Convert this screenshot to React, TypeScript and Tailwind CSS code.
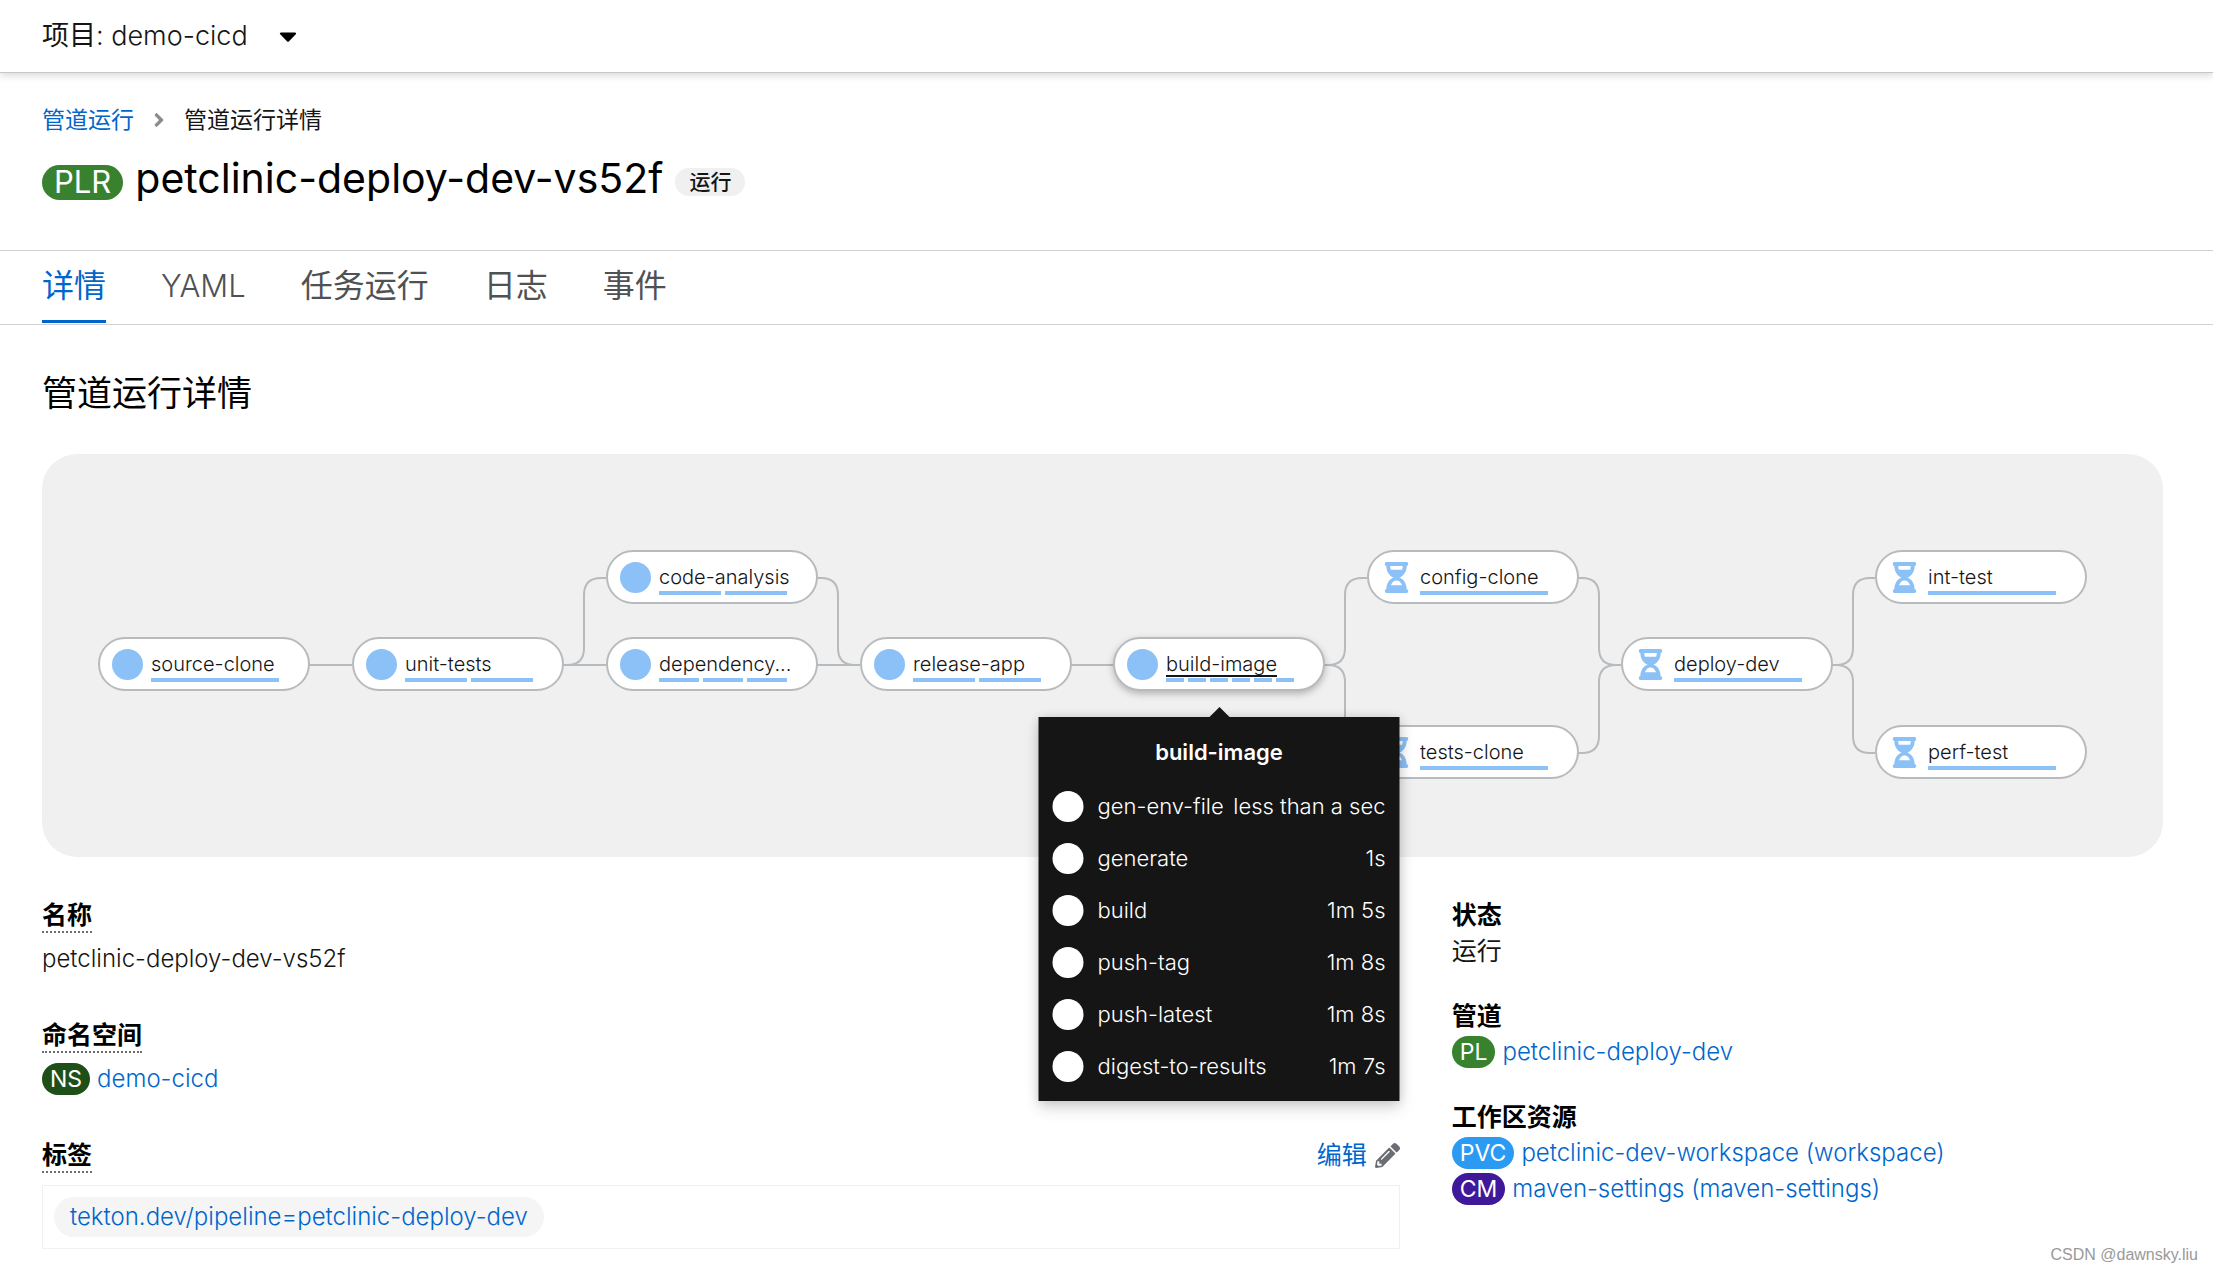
import type { ReactNode } from "react";
import { FaAngleRight, FaCaretDown, FaHourglassHalf, FaPencilAlt } from "react-icons/fa";

type TaskStatus = "running" | "pending";

interface Task {
  name: string;
  status: TaskStatus;
  steps: number;
  place: string;
  active?: boolean;
}

const tasks: Task[] = [
  { name: "source-clone", status: "running", steps: 1, place: "left-[56px] top-[183px]" },
  { name: "unit-tests", status: "running", steps: 2, place: "left-[310px] top-[183px]" },
  { name: "code-analysis", status: "running", steps: 2, place: "left-[564px] top-[96px]" },
  { name: "dependency...", status: "running", steps: 3, place: "left-[564px] top-[183px]" },
  { name: "release-app", status: "running", steps: 2, place: "left-[818px] top-[183px]" },
  { name: "config-clone", status: "pending", steps: 1, place: "left-[1325px] top-[96px]" },
  { name: "tests-clone", status: "pending", steps: 1, place: "left-[1325px] top-[271px]" },
  { name: "deploy-dev", status: "pending", steps: 1, place: "left-[1579px] top-[183px]" },
  { name: "int-test", status: "pending", steps: 1, place: "left-[1833px] top-[96px]" },
  { name: "perf-test", status: "pending", steps: 1, place: "left-[1833px] top-[271px]" },
  { name: "build-image", status: "running", steps: 6, place: "left-[1071px] top-[183px]", active: true },
];

const edges = [
  "M267 211H310",
  "M521 211H564",
  "M521 211H525Q542 211 542 194V141Q542 124 559 124H564",
  "M775 124H779Q796 124 796 141V194Q796 211 813 211H818",
  "M775 211H818",
  "M1029 211H1071",
  "M1282 211H1286Q1303 211 1303 194V141Q1303 124 1320 124H1325",
  "M1282 211H1286Q1303 211 1303 228V282Q1303 299 1320 299H1325",
  "M1536 124H1540Q1557 124 1557 141V194Q1557 211 1574 211H1579",
  "M1536 299H1540Q1557 299 1557 282V228Q1557 211 1574 211H1579",
  "M1790 211H1794Q1811 211 1811 194V141Q1811 124 1828 124H1833",
  "M1790 211H1794Q1811 211 1811 228V282Q1811 299 1828 299H1833",
];

const steps = [
  ["gen-env-file", "less than a sec"],
  ["generate", "1s"],
  ["build", "1m 5s"],
  ["push-tag", "1m 8s"],
  ["push-latest", "1m 8s"],
  ["digest-to-results", "1m 7s"],
];

const tabs = ["详情", "YAML", "任务运行", "日志", "事件"];

function StepTooltip() {
  return (
    <div
      role="tooltip"
      className="absolute top-20 left-1/2 z-10 h-[384px] w-[361px] -translate-x-1/2 bg-[#151515] px-[14px] pt-4 text-white shadow-[0_7px_14px_rgba(3,3,3,0.16),0_0_10px_rgba(3,3,3,0.12)]"
    >
      <svg className="absolute -top-[10px] left-1/2 h-[11px] w-[22px] -translate-x-1/2 fill-[#151515]" viewBox="0 0 22 11" aria-hidden="true">
        <path d="M11 0L22 11H0Z" />
      </svg>
      <p className="mb-[9px] text-center text-[22px] leading-[38px] font-semibold">build-image</p>
      <ul>
        {steps.map(([name, time]) => (
          <li key={name} className="flex h-[52px] items-center text-[22px]">
            <span className="mr-[14px] size-[31px] rounded-full bg-white" />
            <span>{name}</span>
            <span className="ml-auto">{time}</span>
          </li>
        ))}
      </ul>
    </div>
  );
}

function TaskNode({ task }: { task: Task }) {
  const shadow = task.active ? "shadow-[0_3px_7px_rgba(3,3,3,0.25)]" : "";
  return (
    <div className={`absolute ${task.place}`}>
      <a
        href="#logs"
        className={`flex h-[54px] w-[212px] items-center rounded-full border-2 border-[#b8bbbe] bg-white pl-3 ${shadow}`}
      >
        {task.status === "running" ? (
          <span className="size-[31px] shrink-0 rounded-full bg-[#8bc1f7]" />
        ) : (
          <FaHourglassHalf className="size-[31px] shrink-0 text-[#8bc1f7]" />
        )}
        <span className="ml-2 flex w-32 flex-col pt-1">
          <span className={`text-[20px] leading-7 whitespace-nowrap ${task.active ? "underline underline-offset-4" : ""}`}>
            {task.name}
          </span>
          <span className="flex gap-1">
            {Array.from({ length: task.steps }, (_, i) => (
              <span key={i} className="h-1 flex-1 bg-[#8bc1f7]" />
            ))}
          </span>
        </span>
      </a>
      {task.active && <StepTooltip />}
    </div>
  );
}

function Badge({ color, children }: { color: string; children: ReactNode }) {
  return (
    <span className={`mr-[7px] inline-flex h-8 items-center rounded-full px-2 text-[23px] leading-8 font-normal text-white ${color}`}>
      {children}
    </span>
  );
}

function Resource({ badge, color, children }: { badge: string; color: string; children: ReactNode }) {
  return (
    <dd className="flex h-9 items-center">
      <Badge color={color}>{badge}</Badge>
      <a href="#resource" className="text-[#0066cc]">
        {children}
      </a>
    </dd>
  );
}

function Term({ children }: { children: ReactNode }) {
  return (
    <dt className="flex text-[25px] font-bold text-black">
      <span className="h-9 border-b-2 border-dotted border-[#6a6e73]">{children}</span>
    </dt>
  );
}

function PlainTerm({ children }: { children: ReactNode }) {
  return <dt className="text-[25px] font-bold text-black">{children}</dt>;
}

export default function App() {
  return (
    <div className="relative min-h-screen bg-white font-['Inter','Noto_Sans_CJK_SC',sans-serif] text-[24px] leading-9 font-light text-[#151515]">
      <header className="border-b border-[#c7c7c7] px-[42px] shadow-[0_3px_7px_rgba(3,3,3,0.14)]">
        <button type="button" className="flex h-[72px] items-center gap-[26px] text-[27px]">
          <span>
            <span className="font-normal">项目</span>: demo-cicd
          </span>
          <FaCaretDown className="size-7 text-black" />
        </button>
      </header>

      <div className="px-[42px] pt-[31px] pb-11">
        <nav aria-label="breadcrumb" className="flex items-center text-[23px] leading-8 font-normal">
          <a href="#runs" className="text-[#0066cc]">管道运行</a>
          <FaAngleRight className="mx-[14px] size-[22px] text-[#8a8d90]" />
          <span>管道运行详情</span>
        </nav>
        <h1 className="mt-[22px] flex h-12 items-center text-[41px] font-normal text-black">
          <span className="mr-3 flex h-[35px] items-center rounded-full bg-[#38812f] px-3 text-[31px] text-white">PLR</span>
          <span className="pb-2">petclinic-deploy-dev-vs52f</span>
          <span className="ml-3 flex h-7 items-center rounded-full bg-[#f0f0f0] px-[14px] text-[21px] font-medium text-[#151515]">
            运行
          </span>
        </h1>
      </div>

      <div role="tablist" className="flex h-[75px] gap-[55px] border-y border-[#d2d2d2] px-[42px] text-[32px]">
        {tabs.map((tab, i) => (
          <button
            key={tab}
            type="button"
            role="tab"
            aria-selected={i === 0}
            className={
              i === 0
                ? "mb-px border-b-[3px] border-[#0066cc] font-normal text-[#0066cc]"
                : tab === "YAML"
                  ? "mb-1 text-[31px] text-[#4f5255]"
                  : "mb-1 font-normal text-[#4f5255]"
            }
          >
            {tab}
          </button>
        ))}
      </div>

      <main className="pt-11 pr-[50px] pl-[42px]">
        <h2 className="mb-[37px] text-[35px] leading-[48px] font-normal text-black">管道运行详情</h2>

        <section aria-label="pipeline" className="relative h-[403px] rounded-[35px] bg-[#f0f0f0]">
          <svg className="absolute top-0 left-0 h-[403px] w-[2121px] fill-none stroke-[#b8bbbe] stroke-2" aria-hidden="true">
            {edges.map((d) => (
              <path key={d} d={d} />
            ))}
          </svg>
          {tasks.map((task) => (
            <TaskNode key={task.name} task={task} />
          ))}
        </section>

        <div className="grid grid-cols-[21fr_11fr] gap-[52px] pt-10 pb-6">
          <dl>
            <Term>名称</Term>
            <dd className="mt-2 mb-10">petclinic-deploy-dev-vs52f</dd>
            <Term>命名空间</Term>
            <div className="mt-2 mb-10">
              <Resource badge="NS" color="bg-[#1e4f18]">demo-cicd</Resource>
            </div>
            <div className="flex justify-between">
              <Term>标签</Term>
              <dd>
                <button type="button" className="flex items-center gap-2 text-[25px] font-normal text-[#0066cc]">
                  编辑
                  <FaPencilAlt className="size-[25px] text-[#6a6e73]" />
                </button>
              </dd>
            </div>
            <dd className="mt-3 flex border border-[#f0f0f0] px-[11px] py-[11px]">
              <a href="#label" className="flex h-10 items-center rounded-full bg-[#f5f5f5] px-4 text-[#0066cc]">
                tekton.dev/pipeline=petclinic-deploy-dev
              </a>
            </dd>
          </dl>

          <dl>
            <PlainTerm>状态</PlainTerm>
            <dd className="mb-[29px] text-[25px] font-normal">运行</dd>
            <PlainTerm>管道</PlainTerm>
            <div className="mb-[29px]">
              <Resource badge="PL" color="bg-[#38812f]">petclinic-deploy-dev</Resource>
            </div>
            <PlainTerm>工作区资源</PlainTerm>
            <Resource badge="PVC" color="bg-[#2b9af3]">petclinic-dev-workspace (workspace)</Resource>
            <Resource badge="CM" color="bg-[#40199a]">maven-settings (maven-settings)</Resource>
          </dl>
        </div>
      </main>

      <p className="absolute right-[15px] bottom-[7px] font-['Liberation_Sans',sans-serif] text-[16px] leading-6 text-[#999999]">
        CSDN @dawnsky.liu
      </p>
    </div>
  );
}
